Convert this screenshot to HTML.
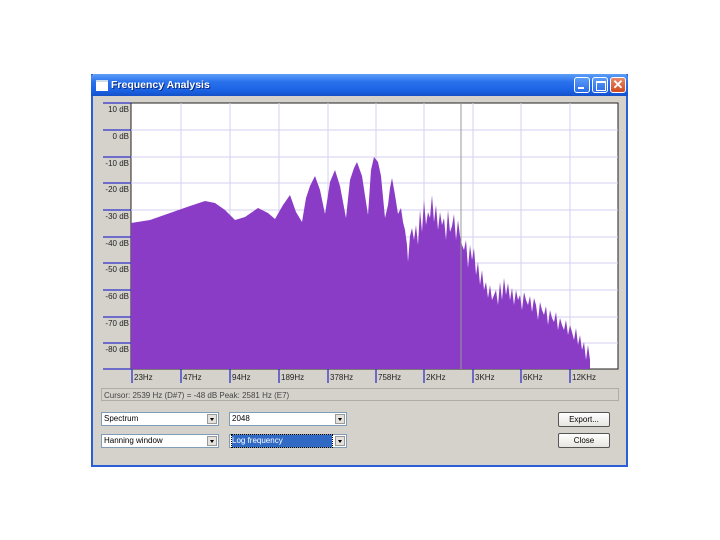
<!DOCTYPE html>
<html><head><meta charset="utf-8"><style>
body{margin:0;width:720px;height:540px;background:#fff;position:relative;overflow:hidden;font-family:"Liberation Sans",sans-serif}
.win{position:absolute;left:91px;top:74px;width:537px;height:393px;background:#d5d2cc;border:2px solid #2a5fd8;border-top:0;box-sizing:border-box}
.title{position:absolute;left:-2px;top:0;width:537px;height:22px;background:linear-gradient(#5d9ff8,#2a72ec 35%,#1a62e4 75%,#1550c8);border-radius:4px 4px 0 0}
.title span{position:absolute;left:20px;top:5px;color:#fff;font-weight:bold;font-size:10.5px;text-shadow:1px 1px #0a2a80}
.ticon{position:absolute;left:5px;top:6px;width:12px;height:9px;background:#fff;border-top:2px solid #cde}
.tb{position:absolute;top:3px;width:16px;height:16px;border:1px solid #fff;border-radius:3px;box-sizing:border-box;background:linear-gradient(#5a9cf8,#2c6ce8)}
.sel{position:absolute;height:14px;background:#fff;border:1px solid #7f9db9;box-sizing:border-box;font-size:8px;line-height:12px;padding-left:2px}
.sel i{position:absolute;right:1px;top:1px;width:10px;height:10px;background:#e4e2dc;border:1px solid #999;box-sizing:border-box}
.sel i:after{content:"";position:absolute;left:2px;top:3px;border:2px solid transparent;border-top:3px solid #000}
.btn{position:absolute;width:52px;height:15px;border:1px solid #555;border-radius:2px;background:linear-gradient(#fff,#e6e5e0);font-size:8px;text-align:center;line-height:14px;box-sizing:border-box}
</style></head><body>
<div class="win">
<div class="title"><div class="ticon"></div><span>Frequency Analysis</span>
<div class="tb" style="left:483px"><div style="position:absolute;left:3px;top:9px;width:6px;height:2px;background:#fff"></div></div>
<div class="tb" style="left:501px"><div style="position:absolute;left:3px;top:3px;width:8px;height:7px;border:1px solid #fff;border-top-width:2px"></div></div>
<div class="tb" style="left:519px;background:linear-gradient(#e8886a,#d04a20);color:#fff;font-size:13px;font-weight:bold;text-align:center;line-height:13px">✕</div>
</div>
</div>
<svg style="position:absolute;left:0;top:0" width="720" height="540">
<rect x="131" y="103" width="487" height="266" fill="#fff" stroke="#222" stroke-width="1"/>
<g stroke="#d4d0f0" stroke-width="1">
<line x1="131" x2="618" y1="130" y2="130"/><line x1="131" x2="618" y1="157" y2="157"/><line x1="131" x2="618" y1="183" y2="183"/><line x1="131" x2="618" y1="210" y2="210"/><line x1="131" x2="618" y1="237" y2="237"/><line x1="131" x2="618" y1="263" y2="263"/><line x1="131" x2="618" y1="290" y2="290"/><line x1="131" x2="618" y1="317" y2="317"/><line x1="131" x2="618" y1="343" y2="343"/>
<line x1="181" x2="181" y1="103" y2="369"/><line x1="230" x2="230" y1="103" y2="369"/><line x1="279" x2="279" y1="103" y2="369"/><line x1="328" x2="328" y1="103" y2="369"/><line x1="376" x2="376" y1="103" y2="369"/><line x1="424" x2="424" y1="103" y2="369"/><line x1="473" x2="473" y1="103" y2="369"/><line x1="521" x2="521" y1="103" y2="369"/><line x1="570" x2="570" y1="103" y2="369"/>
</g>
<polygon fill="#8a3cc6" points="131,369 131,223 150,220 170,213 190,206 205,201 215,203 225,210 235,220 245,217 258,208 268,213 275,219 283,205 290,195 296,212 302,222 306,198 310,186 315,176 320,190 325,214 330,182 335,170 340,186 346,218 350,180 354,168 357,162 362,176 368,215 371,170 374,157 378,162 381,176 385,218 388,205 390,188 392,178 395,195 398,214 401,208 403,222 405,230 407,245 408,262 410,236 412,228 414,240 416,225 418,245 420,210 422,232 424,200 426,225 428,212 430,218 432,195 434,222 436,205 438,230 440,212 442,225 444,218 446,240 448,210 450,232 452,226 454,214 456,240 458,220 460,236 462,245 464,250 466,240 468,268 470,245 472,260 474,248 476,275 478,262 480,285 482,270 484,290 486,282 488,298 490,285 492,300 494,295 496,290 498,305 500,282 502,300 504,278 506,295 508,283 510,300 512,288 514,305 516,290 518,300 520,295 522,310 524,292 526,300 528,305 530,296 532,312 534,298 536,305 538,320 540,302 542,310 544,315 546,306 548,325 550,310 552,318 554,322 556,312 558,330 560,318 562,325 564,330 566,320 568,335 570,325 572,332 574,340 576,328 578,345 580,335 582,350 584,342 586,360 588,345 590,360 590,369"/>
<line x1="461" x2="461" y1="103" y2="369" stroke="#999"/>
<g stroke="#3232c8" stroke-width="1.3">
<line x1="103" x2="131" y1="103" y2="103"/><line x1="103" x2="131" y1="130" y2="130"/><line x1="103" x2="131" y1="157" y2="157"/><line x1="103" x2="131" y1="183" y2="183"/><line x1="103" x2="131" y1="210" y2="210"/><line x1="103" x2="131" y1="237" y2="237"/><line x1="103" x2="131" y1="263" y2="263"/><line x1="103" x2="131" y1="290" y2="290"/><line x1="103" x2="131" y1="317" y2="317"/><line x1="103" x2="131" y1="343" y2="343"/><line x1="103" x2="131" y1="369" y2="369"/>
<line x1="132" x2="132" y1="369" y2="383"/><line x1="181" x2="181" y1="369" y2="383"/><line x1="230" x2="230" y1="369" y2="383"/><line x1="279" x2="279" y1="369" y2="383"/><line x1="328" x2="328" y1="369" y2="383"/><line x1="376" x2="376" y1="369" y2="383"/><line x1="424" x2="424" y1="369" y2="383"/><line x1="473" x2="473" y1="369" y2="383"/><line x1="521" x2="521" y1="369" y2="383"/><line x1="570" x2="570" y1="369" y2="383"/>
</g>
<g font-family="Liberation Sans" font-size="8" fill="#222" text-anchor="end">
<text x="129" y="112">10 dB</text><text x="129" y="139">0 dB</text><text x="129" y="166">-10 dB</text><text x="129" y="192">-20 dB</text><text x="129" y="219">-30 dB</text><text x="129" y="246">-40 dB</text><text x="129" y="272">-50 dB</text><text x="129" y="299">-60 dB</text><text x="129" y="326">-70 dB</text><text x="129" y="352">-80 dB</text>
</g>
<g font-family="Liberation Sans" font-size="8" fill="#222">
<text x="134" y="380">23Hz</text><text x="183" y="380">47Hz</text><text x="232" y="380">94Hz</text><text x="281" y="380">189Hz</text><text x="330" y="380">378Hz</text><text x="378" y="380">758Hz</text><text x="426" y="380">2KHz</text><text x="475" y="380">3KHz</text><text x="523" y="380">6KHz</text><text x="572" y="380">12KHz</text>
</g>
<rect x="101.5" y="388.5" width="517" height="12" fill="none" stroke="#b0aca4"/>
<text x="104" y="398" font-family="Liberation Sans" font-size="8" fill="#444">Cursor: 2539 Hz (D#7) = -48 dB   Peak: 2581 Hz (E7)</text>
</svg>
<div class="sel" style="left:101px;top:412px;width:118px">Spectrum<i></i></div>
<div class="sel" style="left:229px;top:412px;width:118px">2048<i></i></div>
<div class="sel" style="left:101px;top:434px;width:118px">Hanning window<i></i></div>
<div class="sel" style="left:229px;top:434px;width:118px"><span style="background:#316ac5;color:#fff;display:inline-block;width:100px;outline:1px dotted #000">Log frequency</span><i></i></div>
<div class="btn" style="left:558px;top:412px">Export...</div>
<div class="btn" style="left:558px;top:433px">Close</div>
</body></html>
